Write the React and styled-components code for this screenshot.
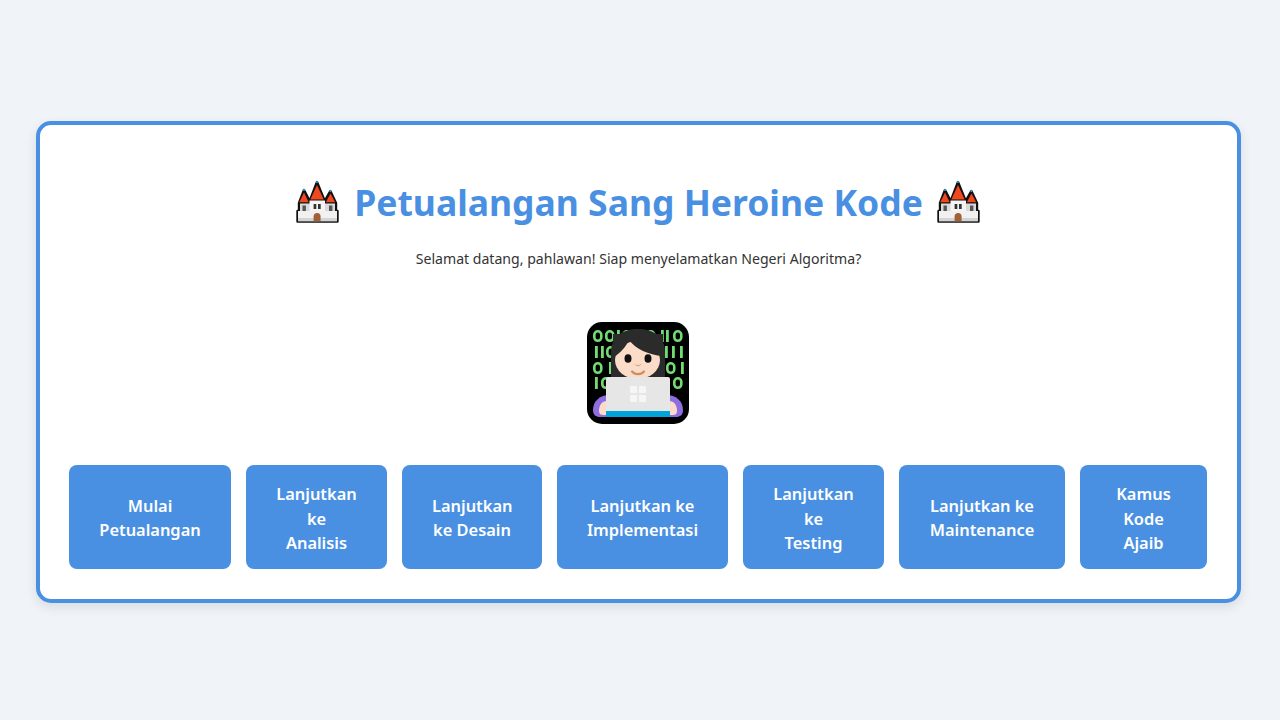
import styled, { createGlobalStyle } from "styled-components";

const GlobalStyle = createGlobalStyle`
  html, body {
    margin: 0;
    height: 100%;
  }
  body {
    background-color: #f0f4f8;
    font-family: "Noto Sans", "Open Sans", sans-serif;
    color: #333;
  }
  #root {
    height: 100%;
  }
`;

const Page = styled.div`
  box-sizing: border-box;
  display: flex;
  height: 720px;
  padding: 4px 3px 0 0;
  align-items: center;
  justify-content: center;
`;

const Card = styled.main`
  box-sizing: border-box;
  width: 1205px;
  height: 482px;
  padding: 29px;
  background: #fff;
  border: 4px solid #4a90e2;
  border-radius: 15px;
  box-shadow: 0 4px 12px rgba(0, 0, 0, 0.1);
  display: flex;
  flex-direction: column;
  align-items: center;
`;

const Title = styled.h1`
  display: flex;
  align-items: center;
  justify-content: center;
  gap: 14px;
  margin: 26px 0 0;
  color: #4a90e2;
  font-size: 35.5px;
  line-height: 44px;
  font-weight: 700;
`;

const Subtitle = styled.p`
  margin: 25px 0 0;
  font-size: 14.1px;
  line-height: 20px;
`;

const Avatar = styled.div`
  display: flex;
  margin: 53px 1px 0 0;
`;

const ButtonRow = styled.div`
  display: grid;
  align-self: flex-start;
  grid-template-columns: 162px 141px 140px 171px 141px 166px 127px;
  gap: 15px;
  margin-top: 41px;
`;

const Button = styled.button`
  height: 104px;
  padding: 17px 30px 15px;
  border: none;
  border-radius: 8px;
  background: #4a90e2;
  color: #fff;
  font-family: inherit;
  font-size: 16.4px;
  line-height: 24.5px;
  font-weight: 600;
  text-align: center;
`;

const Castle = () => (
  <svg width="44" height="44" viewBox="15 10 44 44" aria-hidden="true">
    <path
      d="M23 20l5.700 11L36 12l7.700 19 5.600-10 5.700 12v8h1.500v10.500h-40V41H18v-8z"
      fill="#111"
      stroke="#111"
      strokeWidth="2.4"
      strokeLinejoin="round"
    />
    <rect x="19" y="33.500" width="35" height="9" fill="#d9d9d9" />
    <rect x="28.500" y="30.500" width="15.500" height="12" fill="#f4f4f4" />
    <rect x="17" y="41" width="39" height="10.200" fill="#f1f1f1" />
    <rect x="17" y="48" width="39" height="3.200" fill="#d4d4d4" />
    <path d="M23 22.500l-4.700 9.700h9.400z" fill="#f0481f" />
    <path d="M49.500 23.500l-4.700 8.700h9.400z" fill="#f0481f" />
    <path d="M36 15l-6.700 14.500h13.400z" fill="#f0481f" />
    <rect x="21.500" y="35.500" width="3.400" height="5.500" fill="#555" />
    <rect x="48" y="35.500" width="3.400" height="5.500" fill="#555" />
    <rect x="32.600" y="34" width="2.700" height="5" fill="#333" />
    <rect x="37" y="34" width="2.700" height="5" fill="#333" />
    <path d="M32.600 51.200v-4.700a3.500 3.500 0 0 1 7 0v4.700z" fill="#a0603a" />
    <circle cx="36" cy="12" r="1.100" fill="#2aa4d8" />
    <circle cx="23" cy="20" r="1.100" fill="#2aa4d8" />
    <circle cx="49.300" cy="21" r="1.100" fill="#2aa4d8" />
  </svg>
);

// the rows of binary digits behind the figure, as kind:x per row
const digitRows = [
  { y: 16, items: ["0:15", "0:27", "1:39", "0:44", "0:68", "1:83", "1:88", "0:95"] },
  { y: 32, items: ["1:17", "1:23", "0:28", "0:75", "1:87", "1:94", "1:102"] },
  { y: 48, items: ["0:15", "1:31", "0:88", "1:103"] },
  { y: 63, items: ["1:17", "0:23", "0:95"] },
];

const Technologist = () => (
  <svg width="102" height="102" viewBox="9 8 102 102" aria-hidden="true">
    <rect x="9" y="8" width="102" height="102" rx="15" fill="#000" />
    {digitRows.map(({ y, items }) =>
      items.map((item) => {
        const [kind, x] = item.split(":");
        return kind === "0" ? (
          <rect key={y + item} x={+x + 1.3} y={y + 1.3} width="7" height="9.500" rx="3.500" fill="none" stroke="#72dc72" strokeWidth="2.600" />
        ) : (
          <rect key={y + item} x={x} y={y} width="2.800" height="12" fill="#72dc72" />
        );
      })
    )}
    <path d="M33 66V38c0-15 12-23 27-23s27 8 27 23v28z" fill="#2b2b2b" />
    <ellipse cx="59.500" cy="46" rx="22.500" ry="19" fill="#fbdcc8" />
    <path d="M35 44c7-5 13-11 16-18 7 9 19 15 34 16V20H35z" fill="#2b2b2b" />
    <ellipse cx="50" cy="44.500" rx="3.500" ry="4.300" fill="#111" />
    <ellipse cx="70" cy="44.500" rx="3.500" ry="4.300" fill="#111" />
    <path d="M56.500 49.500c2 2 4.500 2 7 0-1 3.500-6 3.500-7 0z" fill="#d8a77f" />
    <path d="M54 57.500c3 3.500 9 3.500 12 0" fill="none" stroke="#c98f5f" strokeWidth="2.200" strokeLinecap="round" />
    <path d="M15 96c0-9 7-15 17-15h56c10 0 17 6 17 15 0 5-3 7-7 7H22c-4 0-7-2-7-7z" fill="#8e6ee0" />
    <path d="M21 97c0-6 3-10 8-10h62c5 0 8 4 8 10 0 3-2 4-4 4H25c-2 0-4-1-4-4z" fill="#fbdcc8" />
    <rect x="28" y="63" width="64" height="36" rx="2" fill="#e6e6e6" />
    <rect x="28" y="97" width="64" height="6" fill="#00a4d8" />
    <rect x="52" y="72" width="7" height="7" rx="1" fill="#f6f6f6" />
    <rect x="61" y="72" width="7" height="7" rx="1" fill="#f6f6f6" />
    <rect x="52" y="81" width="7" height="7" rx="1" fill="#f6f6f6" />
    <rect x="61" y="81" width="7" height="7" rx="1" fill="#f6f6f6" />
  </svg>
);

const labels = [
  "Mulai Petualangan",
  "Lanjutkan ke Analisis",
  "Lanjutkan ke Desain",
  "Lanjutkan ke Implementasi",
  "Lanjutkan ke Testing",
  "Lanjutkan ke Maintenance",
  "Kamus Kode Ajaib",
];

const App = () => (
  <Page>
    <GlobalStyle />
    <Card>
      <Title>
        <Castle />
        <span>Petualangan Sang Heroine Kode</span>
        <Castle />
      </Title>
      <Subtitle>Selamat datang, pahlawan! Siap menyelamatkan Negeri Algoritma?</Subtitle>
      <Avatar>
        <Technologist />
      </Avatar>
      <ButtonRow>
        {labels.map((label) => (
          <Button key={label}>{label}</Button>
        ))}
      </ButtonRow>
    </Card>
  </Page>
);

export default App;
